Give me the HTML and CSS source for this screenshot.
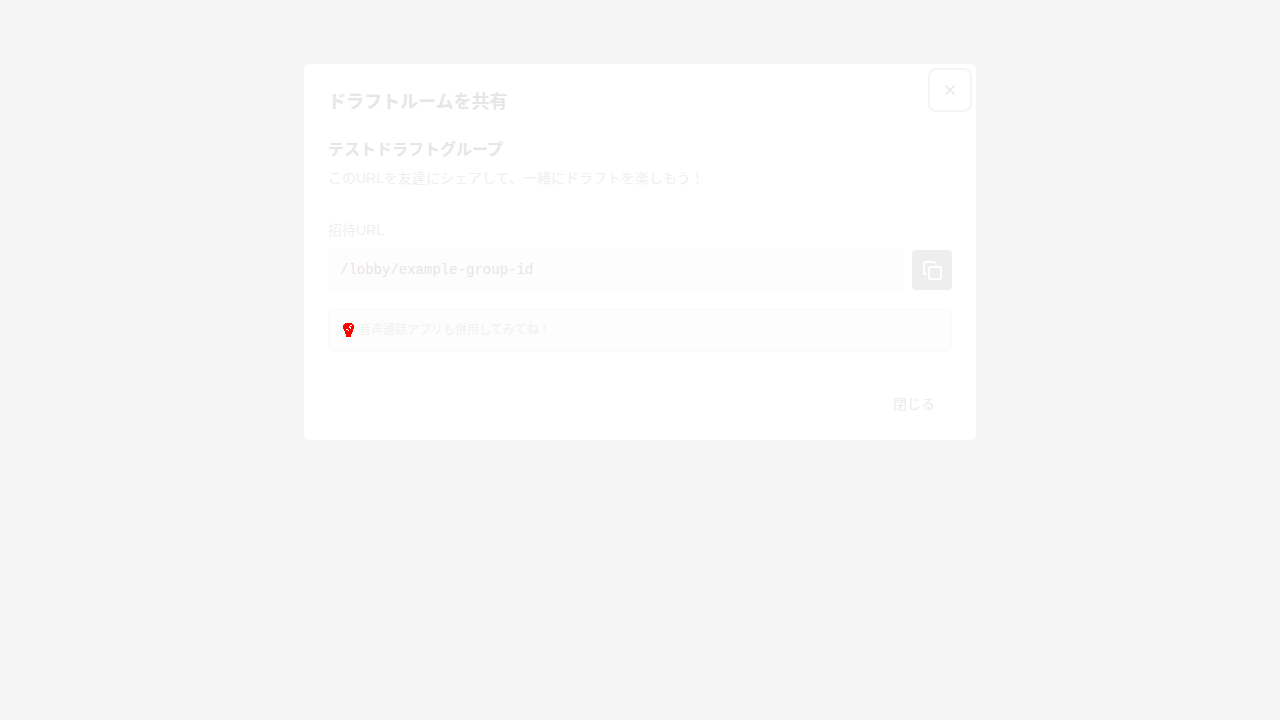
FILE: index.html
```html
<!DOCTYPE html>
<html lang="ja">
<head>
<meta charset="utf-8">
<meta name="viewport" content="width=device-width, initial-scale=1">
<title>ドラフトルームを共有</title>
<link rel="stylesheet" href="styles.css">
</head>
<body>
<main class="overlay">
  <section class="modal" role="dialog" aria-modal="true" aria-labelledby="title">
    <button class="close" type="button" aria-label="閉じる">
      <svg width="12" height="12" viewBox="0 0 12 12" aria-hidden="true"><path d="M1.500 1.500l9 9M10.500 1.500l-9 9"/></svg>
    </button>
    <h2 class="title" id="title">ドラフトルームを共有</h2>
    <div class="body">
      <h3 class="group">テストドラフトグループ</h3>
      <p class="lead">このURLを友達にシェアして、一緒にドラフトを楽しもう！</p>
      <label class="label" for="url">招待URL</label>
      <div class="row">
        <input class="url" id="url" type="text" value="/lobby/example-group-id" readonly>
        <button class="copy" type="button" aria-label="コピー">
          <svg width="20" height="20" viewBox="0 0 20 20" aria-hidden="true"><rect x="7" y="7" width="12" height="12" rx="1.500"/><path d="M3.500 14H2V3c0-.6.400-1 1-1h9.500c.6 0 1 .4 1 1.500"/></svg>
        </button>
      </div>
      <p class="tip">
        <svg class="bulb" width="11" height="14" viewBox="0 0 11 14" aria-hidden="true"><path fill="#f00" d="M2 0h7v1h1v1h1v4h-1v3h-1v2H8v3H3v-3H2V8H1V6H0V2h1V1h1z"/><path fill="#fff" d="M7 2h2v1H7zM6 3h1v1H6zM6 4h2v1H6zM3 6h2v1H3zM7 5h1v1H7zM5 7h1v1H5z"/></svg>
        <span>音声通話アプリも併用してみてね！</span>
      </p>
    </div>
    <footer class="footer"><button class="dismiss" type="button">閉じる</button></footer>
  </section>
</main>
</body>
</html>
```
FILE: styles.css
```css
* { box-sizing: border-box; }
body {
  margin: 0;
  background: #f5f5f5;
  font-family: "Liberation Sans", "Noto Sans CJK JP", sans-serif;
  color: #e6e6e6;
}
button { border: 0; padding: 0; font: inherit; color: inherit; background: none; }
h2, h3, p { margin: 0; }
.overlay { display: flex; justify-content: center; padding: 64px 16px; }
.modal { position: relative; width: 100%; max-width: 672px; background: #fff; border-radius: 6px; }
.close {
  position: absolute;
  top: 4px;
  right: 4px;
  display: grid;
  place-items: center;
  width: 44px;
  height: 44px;
  border: 2px solid #f5f5f5;
  border-radius: 8px;
}
.close svg { stroke: #e8e8e8; stroke-width: 1.5; fill: none; }
.title { padding: 25px 24px 16px; font-size: 18px; line-height: 27px; }
.body { padding: 6px 24px 8px; }
.group { font-size: 16px; line-height: 24px; }
.lead { margin-top: 6px; font-size: 14px; line-height: 21px; color: #efefef; }
.label { display: block; margin-top: 31px; font-size: 14px; line-height: 21px; color: #efefef; }
.row { display: flex; align-items: center; gap: 8px; margin-top: 7px; }
.url {
  flex: 1;
  min-width: 0;
  height: 44px;
  padding: 0 12px;
  border: 0;
  border-radius: 6px;
  background: #fdfdfd;
  color: #e6e6e6;
  font-family: "Liberation Mono", monospace;
  font-size: 14px;
}
.copy { display: grid; place-items: center; width: 40px; height: 40px; border-radius: 4px; background: #eee; }
.copy svg { stroke: #fff; stroke-width: 2; fill: none; stroke-linecap: round; }
.tip {
  display: flex;
  align-items: center;
  gap: 5px;
  height: 44px;
  margin-top: 16px;
  padding: 0 13px;
  border: 2px solid #fbfbfb;
  border-radius: 6px;
  background: #fdfdfd;
  font-size: 12px;
  line-height: 18px;
  color: #f0f0f0;
}
.bulb { shape-rendering: crispEdges; }
.footer { display: flex; justify-content: flex-end; padding: 24px 24px 16px; }
.dismiss { height: 40px; padding: 0 17px; font-size: 14px; line-height: 21px; color: #ebebeb; }
```
